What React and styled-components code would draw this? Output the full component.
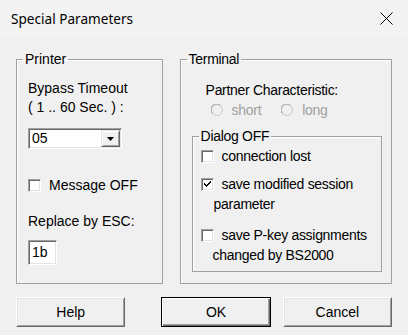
import styled, { createGlobalStyle } from "styled-components"

const GlobalStyle = createGlobalStyle`
  html, body {
    margin: 0;
    padding: 0;
    background: #f0f0f0;
  }

  body {
    font-family: "Liberation Sans", Arial, sans-serif;
    font-size: 14px;
    color: #000;
  }
`

const Dialog = styled.div`
  width: 408px;
  height: 335px;
  background: #f0f0f0;
  overflow: hidden;
`

const TitleBar = styled.div`
  height: 36px;
  display: flex;
  align-items: center;
  justify-content: space-between;
  padding: 0 15px 0 11px;
  box-sizing: border-box;
  background: #f3f3f3;
`

const Title = styled.span`
  font-family: "Segoe UI", "Noto Sans", sans-serif;
  font-size: 13.6px;
  color: #000;
`

const Body = styled.div`
  padding: 15px 16px 0;
`

const Groups = styled.div`
  display: flex;
  gap: 17px;
  height: 233px;
`

const Group = styled.fieldset`
  margin: 0;
  width: ${({ $width }) => $width}px;
  height: ${({ $height }) => $height}px;
  box-sizing: border-box;
  border: 1px solid #a0a0a0;
  box-shadow: 1px 1px 0 #fff inset;
  padding: 0 0 0 ${({ $pad }) => $pad}px;
  min-width: 0;
  letter-spacing: ${({ $tight }) => ($tight ? "-0.3px" : "normal")};
`

const Legend = styled.legend`
  padding: 0 2px;
  margin-left: ${({ $ml }) => $ml}px;
  line-height: 16px;
  font-size: 14px;
`

const Column = styled.div`
  display: flex;
  flex-direction: column;
  align-items: flex-start;
`

const Label = styled.div`
  line-height: ${({ $lh }) => $lh || 19}px;
  margin-top: ${({ $mt }) => $mt || 0}px;
  padding-left: ${({ $indent }) => $indent || 0}px;
  color: ${({ $disabled }) => ($disabled ? "#a0a0a0" : "#000")};
  white-space: nowrap;
`

const Combo = styled.div`
  margin-top: 11px;
  width: 94px;
  height: 21px;
  box-sizing: border-box;
  display: flex;
  align-items: stretch;
  background: #fff;
  border-top: 1px solid #a0a0a0;
  border-left: 1px solid #a0a0a0;
  border-right: 1px solid #fff;
  border-bottom: 1px solid #fff;
  box-shadow: inset 1px 1px 0 #696969, inset -1px -1px 0 #e3e3e3;
  padding: 1px;
`

const ComboText = styled.div`
  flex: 1;
  line-height: 17px;
  padding-left: 2px;
`

const ArrowButton = styled.div`
  width: 19px;
  box-sizing: border-box;
  background: #f0f0f0;
  border-top: 1px solid #e3e3e3;
  border-left: 1px solid #e3e3e3;
  border-right: 1px solid #696969;
  border-bottom: 1px solid #696969;
  box-shadow: inset 1px 1px 0 #fff, inset -1px -1px 0 #a0a0a0;
  display: flex;
  align-items: center;
  justify-content: center;
`

const CheckRow = styled.div`
  display: flex;
  align-items: flex-start;
  line-height: 20px;
  margin-top: ${({ $mt }) => $mt || 0}px;
  white-space: nowrap;
`

const Box = styled.span`
  margin-top: 4px;
  width: 13px;
  height: 13px;
  box-sizing: border-box;
  flex: none;
  background: #fff;
  border-top: 1px solid #a0a0a0;
  border-left: 1px solid #a0a0a0;
  border-right: 1px solid #fff;
  border-bottom: 1px solid #fff;
  box-shadow: inset 1px 1px 0 #696969, inset -1px -1px 0 #e3e3e3;
  display: flex;
  align-items: center;
  justify-content: center;
`

const BoxText = styled.span`
  margin-left: 8px;
`

const RadioRow = styled.div`
  display: flex;
  align-items: center;
  margin-top: 4px;
  padding-left: 19px;
  line-height: 16px;
  color: #a0a0a0;
`

const RadioItem = styled.div`
  display: flex;
  align-items: center;
  gap: 9px;
  margin-right: ${({ $mr }) => $mr || 0}px;
`

const Edit = styled.div`
  margin-top: 9px;
  width: 29px;
  height: 25px;
  box-sizing: border-box;
  background: #fff;
  border-top: 1px solid #a0a0a0;
  border-left: 1px solid #a0a0a0;
  border-right: 1px solid #fff;
  border-bottom: 1px solid #fff;
  box-shadow: inset 1px 1px 0 #696969, inset -1px -1px 0 #e3e3e3;
  padding: 3px 0 0 3px;
  line-height: 16px;
`

const InnerGroup = styled(Group)`
  margin-top: 10px;
`

const Buttons = styled.div`
  display: flex;
  margin-top: 13px;
`

const Button = styled.button`
  width: 110px;
  height: 30px;
  margin-left: ${({ $ml }) => $ml || 0}px;
  box-sizing: border-box;
  font-family: "Liberation Sans", Arial, sans-serif;
  font-size: 14px;
  color: #000;
  background: #f0f0f0;
  padding: 0;
  border-top: 1px solid ${({ $default }) => ($default ? "#000" : "#fff")};
  border-left: 1px solid ${({ $default }) => ($default ? "#000" : "#fff")};
  border-right: 1px solid ${({ $default }) => ($default ? "#000" : "#696969")};
  border-bottom: 1px solid ${({ $default }) => ($default ? "#000" : "#696969")};
  box-shadow: ${({ $default }) =>
    $default
      ? "inset 1px 1px 0 #fff, inset -1px -1px 0 #696969, inset -2px -2px 0 #a0a0a0"
      : "inset 1px 1px 0 #e3e3e3, inset -1px -1px 0 #a0a0a0"};
`

const Check = () => (
  <svg width="7" height="7" viewBox="0 0 7 7">
    <path d="M0 2h1v1h1v1h1V3h1V2h1V1h1V0h1v2H6v1H5v1H4v1H3v1H2V5H1V4H0z" fill="#000" />
  </svg>
)

const CheckBox = ({ checked, children, mt }) => (
  <CheckRow $mt={mt}>
    <Box>{checked && <Check />}</Box>
    <BoxText>{children}</BoxText>
  </CheckRow>
)

const Radio = () => (
  <svg width="12" height="12" viewBox="0 0 12 12">
    <circle cx="6" cy="6" r="5.5" fill="#f0f0f0" stroke="#c8c8c8" />
    <path d="M1.5 9.5A5 5 0 0 1 9.5 1.5" fill="none" stroke="#a0a0a0" />
  </svg>
)

const Close = () => (
  <svg width="13" height="13" viewBox="0 0 13 13">
    <path d="M0.5 0.5l12 12M12.5 0.5l-12 12" stroke="#000" strokeWidth="1" />
  </svg>
)

const Arrow = () => (
  <svg width="7" height="4" viewBox="0 0 7 4">
    <path d="M0 0h7L3.5 4z" fill="#000" />
  </svg>
)

export default function App() {
  return (
    <>
      <GlobalStyle />
      <Dialog>
        <TitleBar>
          <Title>Special Parameters</Title>
          <Close />
        </TitleBar>
        <Body>
          <Groups>
            <Group $width={147} $height={233} $pad={11}>
              <Legend $ml={-5}>Printer</Legend>
              <Column>
                <Label $mt={12}>
                  Bypass Timeout
                  <br />( 1 .. 60 Sec. ) :
                </Label>
                <Combo>
                  <ComboText>05</ComboText>
                  <ArrowButton>
                    <Arrow />
                  </ArrowButton>
                </Combo>
                <CheckBox mt={26}>Message OFF</CheckBox>
                <Label $mt={17}>Replace by ESC:</Label>
                <Edit>1b</Edit>
              </Column>
            </Group>
            <Group $width={213} $height={233} $pad={11} $tight>
              <Legend $ml={-5}>Terminal</Legend>
              <Label $mt={15} $lh={16} $indent={14}>
                Partner Characteristic:
              </Label>
              <RadioRow>
                <RadioItem $mr={20}>
                  <Radio />
                  short
                </RadioItem>
                <RadioItem>
                  <Radio />
                  long
                </RadioItem>
              </RadioRow>
              <InnerGroup $width={190} $height={144} $pad={8} $tight>
                <Legend $ml={-2}>Dialog OFF</Legend>
                <CheckBox mt={2}>connection lost</CheckBox>
                <CheckBox mt={8} checked>
                  save modified session
                </CheckBox>
                <Label $lh={20} $indent={13}>
                  parameter
                </Label>
                <CheckBox mt={11}>save P-key assignments</CheckBox>
                <Label $lh={21} $indent={12}>
                  changed by BS2000
                </Label>
              </InnerGroup>
            </Group>
          </Groups>
          <Buttons>
            <Button>Help</Button>
            <Button $ml={36} $default>
              OK
            </Button>
            <Button $ml={12}>Cancel</Button>
          </Buttons>
        </Body>
      </Dialog>
    </>
  )
}
